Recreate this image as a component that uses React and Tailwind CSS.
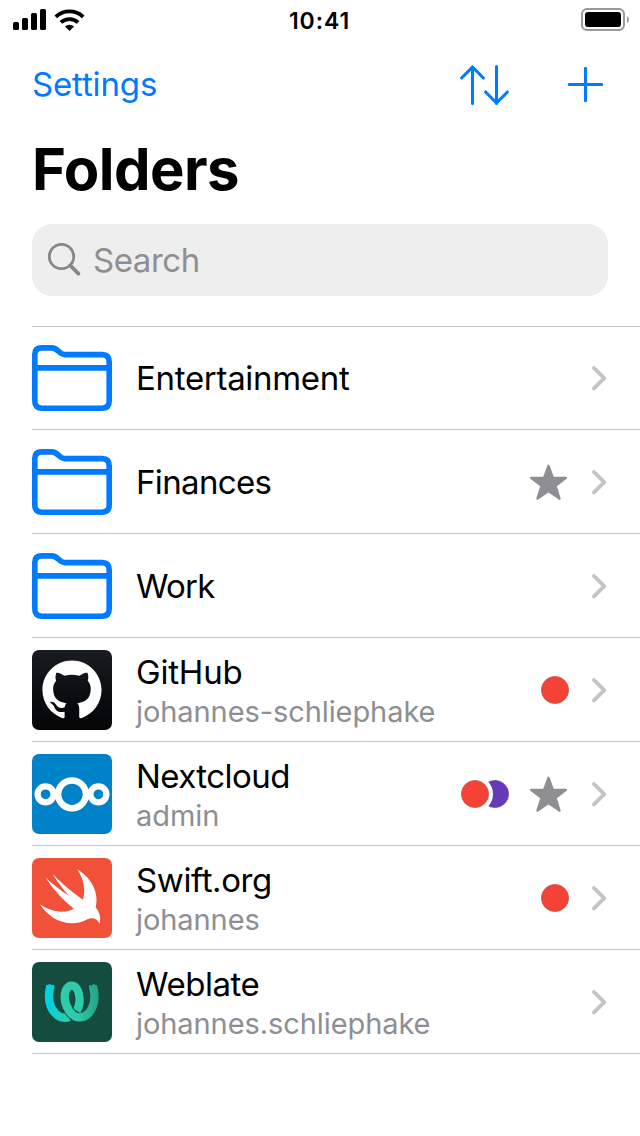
import React from "react";

function StatusBar() {
  return (
    <div className="flex h-10 items-start justify-between">
      <svg className="h-10 w-[200px]" viewBox="0 0 200 40">
        <rect x="13" y="22" width="6" height="8" rx="1.6" />
        <rect x="22" y="18" width="6" height="12" rx="1.6" />
        <rect x="31" y="13" width="6" height="17" rx="1.6" />
        <rect x="40" y="9" width="6" height="21" rx="1.6" />
        <g fill="none" stroke="#000" strokeWidth="3.9">
          <path d="M55.800 16.800a20 20 0 0 1 27.400 0" />
          <path d="M60.900 22.400a12.800 12.800 0 0 1 17.200 0" />
        </g>
        <path d="M65 26.500a6.400 6.400 0 0 1 9 0l-4.500 4.400z" />
      </svg>
      <span className="-ml-px pt-[5px] text-[23px] leading-8 font-semibold tracking-[0.900px]">10:41</span>
      <svg className="h-10 w-[200px]" viewBox="0 0 200 40">
        <rect x="142" y="9" width="42" height="21" rx="5" fill="none" stroke="#999" strokeWidth="2" />
        <rect x="145" y="12" width="36" height="15" rx="3" />
        <path d="M187 16v7q2-1 2-3.500t-2-3.500z" fill="#999" />
      </svg>
    </div>
  );
}

function FolderIcon() {
  return (
    <svg className="h-20 w-20 shrink-0" viewBox="0 0 80 80" fill="none" stroke="#007aff" strokeWidth="5.600">
      <path d="M2.800 16.500Q2.800 9.900 9.800 9.900H20C26 9.900 27 16.600 33 16.600H70Q77.200 16.600 77.200 23.800V63Q77.200 70.200 70 70.200H10Q2.800 70.200 2.800 63Z" />
      <path d="M3 29.900H77" />
    </svg>
  );
}

function GitHubIcon() {
  return (
    <svg className="h-20 w-20 shrink-0 rounded-[7px] bg-linear-to-b from-[#181c22] to-[#040505]" viewBox="0 0 80 80" fill="#fff">
      <path
        transform="translate(10.400 9.800) scale(2.465)"
        d="M12 .297c-6.630 0-12 5.373-12 12 0 5.303 3.438 9.800 8.205 11.385.6.113.82-.258.82-.577 0-.285-.01-1.040-.015-2.040-3.338.724-4.042-1.610-4.042-1.610C4.422 18.070 3.633 17.700 3.633 17.700c-1.087-.744.084-.729.084-.729 1.205.084 1.838 1.236 1.838 1.236 1.070 1.835 2.809 1.305 3.495.998.108-.776.417-1.305.76-1.605-2.665-.3-5.466-1.332-5.466-5.930 0-1.310.465-2.380 1.235-3.220-.135-.303-.54-1.523.105-3.176 0 0 1.005-.322 3.300 1.230.96-.267 1.980-.399 3-.405 1.020.006 2.040.138 3 .405 2.280-1.552 3.285-1.230 3.285-1.230.645 1.653.24 2.873.12 3.176.765.84 1.230 1.910 1.230 3.220 0 4.610-2.805 5.625-5.475 5.920.42.36.81 1.096.81 2.220 0 1.606-.015 2.896-.015 3.286 0 .315.21.69.825.57C20.565 22.092 24 17.592 24 12.297c0-6.627-5.373-12-12-12"
      />
    </svg>
  );
}

function NextcloudIcon() {
  return (
    <svg className="h-20 w-20 shrink-0 rounded-[7px] bg-[#0082c9]" viewBox="0 0 80 80" fill="none" stroke="#fff">
      <circle cx="40" cy="40.300" r="13.900" strokeWidth="6.500" />
      <circle cx="13.600" cy="40.300" r="8" strokeWidth="6.300" />
      <circle cx="66.400" cy="40.300" r="8" strokeWidth="6.300" />
    </svg>
  );
}

function SwiftIcon() {
  return (
    <svg className="h-20 w-20 shrink-0 rounded-[7px] bg-[#f05138]" viewBox="36 24 240 240" fill="#fff">
      <path d="M172 58C220 88 237 134 227 172C240 188 243 207 239 221C230 204 217 201 202 208C188 216 174 220 157 220C116 220 80 196 60 163C90 184 130 193 162 176C128 151 99 117 76 82C97 102 119 120 148 138C129 118 113 97 98 72C125 101 155 126 189 149C198 121 191 87 172 58Z" />
    </svg>
  );
}

function WeblateIcon() {
  return (
    <svg className="h-20 w-20 shrink-0 rounded-[7px] bg-[#144d3f]" viewBox="36 21 240 240" fill="none">
      <defs>
        <linearGradient id="weblate-left" x1="76" y1="0" x2="145" y2="0" gradientUnits="userSpaceOnUse">
          <stop stopColor="#00d2e6" />
          <stop offset="1" stopColor="#2eccaa" />
        </linearGradient>
        <linearGradient id="weblate-right" x1="170" y1="0" x2="234" y2="0" gradientUnits="userSpaceOnUse">
          <stop stopColor="#2eccaa" />
          <stop offset="1" stopColor="#26a286" />
        </linearGradient>
      </defs>
      <path d="M91 94C82 128 89 158 105 174C118 188 132 191 148 186" stroke="url(#weblate-left)" strokeWidth="25" />
      <path d="M79 91L90 87L94 90L103 91L104 98L79 98Z" fill="#00d2e6" />
      <path d="M170 167C180 151 180 132 177 119C174 101 165 92 155 92C144 92 134 105 134 127" stroke="#2eccaa" strokeWidth="25" />
      <path d="M134 127C134 150 152 187 178 187" stroke="#144d3f" strokeWidth="30" />
      <path d="M134 126C134 150 152 187 178 187C208 187 234 149 219 93" stroke="url(#weblate-right)" strokeWidth="25" />
      <path d="M207 91L215 91L220 87L230 91L231 98L207 98Z" fill="#26a286" />
    </svg>
  );
}

function Star() {
  return (
    <svg className="h-10 w-10" viewBox="0 0 40 40" fill="#8e8e93" stroke="#8e8e93" strokeWidth="2.400" strokeLinejoin="round">
      <path d="M19.500 3.800L23.800 15.600L36.900 15.900L26.500 23.900L30.500 36.500L19.500 29L8.500 36.500L12.500 23.900L2.100 15.900L15.200 15.600Z" />
    </svg>
  );
}

function Tags({ two }) {
  return (
    <svg className="h-8 w-[50px]" viewBox="0 0 50 32">
      {two && (
        <>
          <circle cx="35" cy="16" r="13.600" fill="#673ab7" stroke="#6653a2" strokeWidth="0.800" />
          <circle cx="15" cy="16" r="18" fill="#fff" />
        </>
      )}
      <circle cx={two ? 15 : 35} cy="16" r="13.600" fill="#f44336" stroke="#bd5b53" strokeWidth="0.800" />
    </svg>
  );
}

const rows = [
  { name: "Entertainment", icon: FolderIcon, nameClass: "tracking-[-0.300px]" },
  { name: "Finances", icon: FolderIcon, star: true, nameClass: "tracking-[-0.650px]" },
  { name: "Work", icon: FolderIcon, nameClass: "tracking-[-0.800px]" },
  { name: "GitHub", user: "johannes-schliephake", icon: GitHubIcon, tags: 1, nameClass: "tracking-[-0.200px]" },
  { name: "Nextcloud", user: "admin", icon: NextcloudIcon, tags: 2, star: true, nameClass: "tracking-[-0.550px]" },
  { name: "Swift.org", user: "johannes", icon: SwiftIcon, tags: 1, nameClass: "tracking-[-0.400px]" },
  { name: "Weblate", user: "johannes.schliephake", icon: WeblateIcon, nameClass: "tracking-[-0.450px]" },
];

function Row({ row }) {
  const Icon = row.icon;
  return (
    <li className="flex h-[104px] items-center pr-8 shadow-[inset_0_-1px_0_#c6c6c8]">
      <Icon />
      <div className="ml-6 flex-1">
        <div className={`text-[33px] leading-[42px] ${row.nameClass}`}>{row.name}</div>
        {row.user && (
          <div className="-mt-0.5 -mb-0.5 pt-0.5 text-[29px] leading-[38px] tracking-[-0.080px] text-[#8e8e93]">{row.user}</div>
        )}
      </div>
      <div className={`flex items-center gap-[19px] ${row.star ? "mr-[23px]" : "mr-[22px]"}`}>
        {row.tags && <Tags two={row.tags === 2} />}
        {row.star && <Star />}
      </div>
      <svg className="h-8 w-4" viewBox="0 0 16 32" fill="none" stroke="#c4c4c6" strokeWidth="3.800" strokeLinecap="round" strokeLinejoin="round">
        <path d="M2 6L12.200 16.200L2 26.400" />
      </svg>
    </li>
  );
}

export default function App() {
  return (
    <main className="h-[1136px] w-[640px] overflow-hidden bg-white font-['Inter',sans-serif] text-black">
      <StatusBar />
      <nav className="flex h-[88px] items-center justify-between pr-9 pl-8 text-[#007aff]">
        <button className="text-[33px] leading-[42px] tracking-[-0.150px]">Settings</button>
        <div className="flex items-center gap-[56px]">
          <svg className="h-11 w-[52px]" viewBox="0 0 52 44" fill="none" stroke="currentColor" strokeWidth="3.100" strokeLinecap="round" strokeLinejoin="round">
            <path d="M13.500 41.500V5M2.600 16L13.500 5L24.400 16M37.500 4.500V41.500M26.600 30L37.500 41L48.400 30" />
          </svg>
          <svg className="mr-px h-9 w-9" viewBox="0 0 36 36" fill="none" stroke="currentColor" strokeWidth="3.100" strokeLinecap="round">
            <path d="M18.500 2.300V34.700M2.300 18.500H34.700" />
          </svg>
        </div>
      </nav>
      <h1 className="flex h-24 items-center pb-3.5 pl-8 text-[58px] font-bold tracking-[-0.550px]">Folders</h1>
      <div className="mx-8 flex h-[72px] items-center rounded-[20px] bg-[#eeeeee] pl-4 text-[#8e8e93]">
        <svg className="mr-[13px] h-8 w-8 overflow-visible" viewBox="0 0 32 32" fill="none" stroke="#87878b" strokeLinecap="round">
          <circle cx="13.500" cy="12.500" r="12.200" strokeWidth="2.800" />
          <path d="M22.200 21.400L30.400 29.600" strokeWidth="3.800" />
        </svg>
        <span className="text-[33px] leading-[42px] tracking-[-0.450px]">Search</span>
      </div>
      <ul className="mt-[30px] ml-8 shadow-[inset_0_1px_0_#c6c6c8]">
        {rows.map((row) => (
          <Row key={row.name} row={row} />
        ))}
      </ul>
    </main>
  );
}
